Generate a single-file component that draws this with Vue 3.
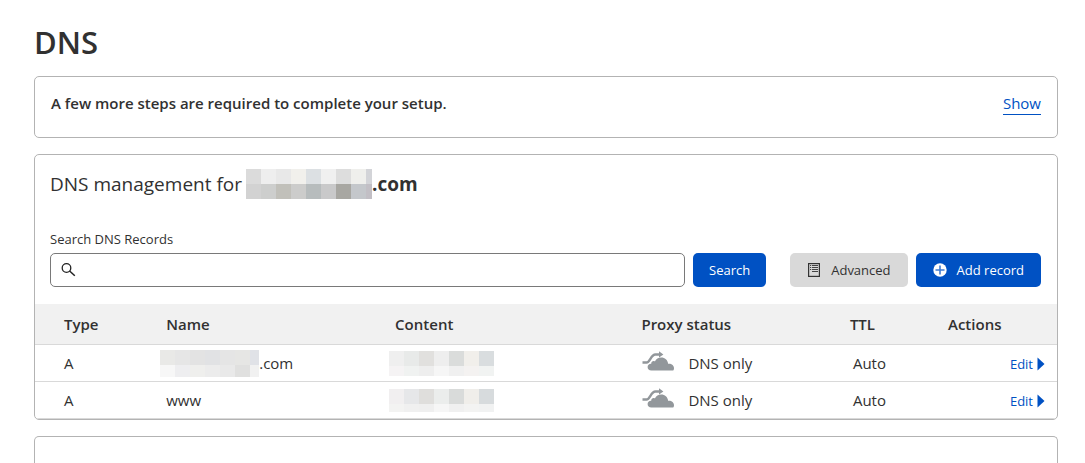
<script setup>
import { ref } from 'vue'

const query = ref('')

const domainMask = {
  width: 126,
  height: 30,
  rows: [
    ['#dbdbdb', '#eeeeee', '#e8e8e8', '#f1f0ec', '#dce0e3', '#f0f0f0', '#dddddd', '#efefec', '#d3d4d8'],
    ['#d2d2d2', '#cdcecd', '#c1c0ba', '#cccccb', '#b7bcbd', '#c9c9ca', '#a8a7a2', '#c4c7cb', '#c2bfc5'],
  ],
}

const records = [
  {
    type: 'A',
    name: '.com',
    nameMask: {
      width: 99,
      height: 27,
      rows: [
        ['#e9e9e7', '#e6e6e6', '#e3e3e3', '#e1e2e4', '#e5e5e5', '#e6e6e4', '#e0e2e7'],
        ['#f7f7f7', '#eeeef0', '#efefed', '#ececec', '#e9e9e9', '#e0e0df', '#f1f1f1'],
      ],
    },
    contentMask: {
      width: 105,
      height: 25,
      rows: [
        ['#efefef', '#e8eae9', '#e1e0de', '#eeeeee', '#dadcdb', '#f1efeb', '#d9dddf'],
        ['#f5f3f4', '#f0f2f1', '#eeeeee', '#f6f6f6', '#f0f0f0', '#f4f2f1', '#f1f3f2'],
      ],
    },
    ttl: 'Auto',
  },
  {
    type: 'A',
    name: 'www',
    nameMask: null,
    contentMask: {
      width: 105,
      height: 23,
      rows: [
        ['#f1eff0', '#e6e7e9', '#dfdedc', '#ebedec', '#d9dbda', '#f0eeea', '#d7dbdd'],
        ['#f3f3f2', '#f0f0f0', '#efefef', '#f6f6f6', '#f0f0f0', '#f3f3f2', '#f1f2f2'],
      ],
    },
    ttl: 'Auto',
  },
]
</script>

<template>
  <main class="page">
    <h1 class="title">DNS</h1>

    <section class="card notice">
      <strong class="notice-text">A few more steps are required to complete your setup.</strong>
      <a class="show" href="#">Show</a>
    </section>

    <section class="card">
      <h2 class="heading">
        <span>DNS management for</span>
        <svg class="mask" :width="domainMask.width" :height="domainMask.height" aria-hidden="true" shape-rendering="crispEdges">
          <template v-for="(row, y) in domainMask.rows" :key="y">
            <rect v-for="(fill, x) in row" :key="x" :x="x * 15" :y="y * 15" width="15" height="15" :fill="fill" />
          </template>
        </svg>
        <b>.com</b>
      </h2>

      <form class="toolbar" @submit.prevent>
        <div class="field">
          <label for="dns-search">Search DNS Records</label>
          <div class="search-row">
            <div class="input-wrap">
              <svg class="search-icon" width="16" height="16" viewBox="0 0 16 16" aria-hidden="true">
                <circle cx="5.5" cy="6" r="4.3" fill="none" stroke="#222" stroke-width="1.3" />
                <path d="M8.6 9L13.8 13.8" stroke="#222" stroke-width="1.5" />
              </svg>
              <input id="dns-search" v-model="query" type="text" />
            </div>
            <button class="btn primary search" type="submit">Search</button>
          </div>
        </div>
        <div class="actions">
          <button class="btn secondary" type="button">
            <svg width="14" height="14" viewBox="0 0 14 14" aria-hidden="true">
              <rect x="1.6" y="0.6" width="10.8" height="12.8" fill="none" stroke="#333" stroke-width="1.2" />
              <path d="M3 2.5h1.2M5 2.5h6M3 4.5h1.2M5 4.5h6M3 6.5h1.2M5 6.5h6M5 8.5h6" stroke="#333" stroke-width="0.9" />
            </svg>
            <span>Advanced</span>
          </button>
          <button class="btn primary" type="button">
            <svg width="14" height="14" viewBox="0 0 14 14" aria-hidden="true">
              <circle cx="7" cy="7" r="6.7" fill="#fff" />
              <path d="M7 2.5v9M2.5 7h9" stroke="#3f7bd3" stroke-width="1.6" />
            </svg>
            <span>Add record</span>
          </button>
        </div>
      </form>

      <table class="records">
        <colgroup>
          <col class="c-type" />
          <col class="c-name" />
          <col class="c-content" />
          <col class="c-proxy" />
          <col class="c-ttl" />
          <col class="c-actions" />
        </colgroup>
        <thead>
          <tr>
            <th scope="col">Type</th>
            <th scope="col">Name</th>
            <th scope="col">Content</th>
            <th scope="col">Proxy status</th>
            <th scope="col">TTL</th>
            <th scope="col">Actions</th>
          </tr>
        </thead>
        <tbody>
          <tr v-for="(record, i) in records" :key="i">
            <td>{{ record.type }}</td>
            <td>
              <div class="cell">
                <svg v-if="record.nameMask" class="mask inset" :width="record.nameMask.width" :height="record.nameMask.height" aria-hidden="true" shape-rendering="crispEdges">
                  <template v-for="(row, y) in record.nameMask.rows" :key="y">
                    <rect v-for="(fill, x) in row" :key="x" :x="x * 15" :y="y * 15" width="15" height="15" :fill="fill" />
                  </template>
                </svg>
                <span>{{ record.name }}</span>
              </div>
            </td>
            <td>
              <div class="cell">
                <svg class="mask inset" :width="record.contentMask.width" :height="record.contentMask.height" aria-hidden="true" shape-rendering="crispEdges">
                  <template v-for="(row, y) in record.contentMask.rows" :key="y">
                    <rect v-for="(fill, x) in row" :key="x" :x="x * 15" :y="y * 15" width="15" height="15" :fill="fill" />
                  </template>
                </svg>
              </div>
            </td>
            <td>
              <div class="cell proxy">
                <svg class="cloud" width="34" height="24" viewBox="0 0 34 24" aria-hidden="true">
                  <path d="M1.5 11.5H5.6C9.2 11.5 9.8 3.5 14.4 3.5H18.5" fill="none" stroke="#92979b" stroke-width="2.4" />
                  <path d="M18 0.3L22.4 3.4L18 6.5Z" fill="#92979b" />
                  <path d="M10.4 19.6C8 19.6 6.6 18 6.6 16C6.6 14 8.1 12.7 10.2 12.8C10.2 10.6 12.1 9.5 13.9 10.4C15.1 8 17.4 6.6 20.2 6.6C23.9 6.6 26.7 9.1 27.1 12.7C30.4 12.3 33 14.1 33 17.3C33 18.9 32.4 19.6 31.7 19.6Z" fill="#92979b" />
                </svg>
                <span>DNS only</span>
              </div>
            </td>
            <td class="ttl">{{ record.ttl }}</td>
            <td class="edit-cell">
              <a class="edit" href="#">
                <span>Edit</span>
                <svg width="8" height="14" viewBox="0 0 8 14" aria-hidden="true">
                  <path d="M0.5 0.5L7.5 7L0.5 13.5Z" fill="#0051c3" />
                </svg>
              </a>
            </td>
          </tr>
        </tbody>
      </table>
    </section>

    <section class="card next"></section>
  </main>
</template>

<style>
body {
  background: #fff;
}
</style>

<style scoped>
.page {
  box-sizing: border-box;
  padding: 20px 27px 0 34px;
  color: #313131;
  font-family: "Segoe UI", "Open Sans", "Noto Sans", sans-serif;
  font-size: 15px;
  line-height: 20px;
}
.title {
  margin: 0 0 12px;
  font-size: 31px;
  line-height: 44px;
  font-weight: 600;
}
.card {
  margin-bottom: 16px;
  border: 1px solid #b3b3b3;
  border-radius: 5px;
  overflow: hidden;
}
.notice {
  display: flex;
  justify-content: space-between;
  align-items: flex-start;
  padding: 16px 16px 22px;
}
.notice-text {
  line-height: 20px;
  font-weight: 600;
}
.show {
  color: #0051c3;
  line-height: 21px;
  text-decoration: none;
  border-bottom: 1px solid #0051c3;
}
.heading {
  display: flex;
  align-items: center;
  margin: 14px 16px 0 15px;
  font-size: 19px;
  line-height: 30px;
  font-weight: 400;
}
.heading b {
  font-weight: 700;
}
.heading .mask {
  margin-left: 4px;
}
.mask {
  display: block;
  flex: none;
}
.toolbar {
  display: flex;
  align-items: flex-end;
  gap: 24px;
  padding: 30px 16px 17px 15px;
}
.field {
  flex: 1;
}
.field label {
  display: block;
  margin-bottom: 4px;
  font-size: 13px;
  line-height: 20px;
}
.search-row {
  display: flex;
  align-items: center;
  gap: 8px;
}
.input-wrap {
  display: flex;
  flex: 1;
  align-items: center;
  gap: 8px;
  height: 32px;
  padding: 0 10px;
  border: 1px solid #797979;
  border-radius: 5px;
}
.input-wrap input {
  flex: 1;
  min-width: 0;
  padding: 0;
  border: 0;
  outline: 0;
  background: transparent;
  font: inherit;
}
.actions {
  display: flex;
  gap: 8px;
}
.btn {
  display: flex;
  align-items: center;
  justify-content: center;
  gap: 10px;
  height: 34px;
  padding: 0 17px;
  border: 0;
  border-radius: 5px;
  font-family: inherit;
  font-size: 13px;
  line-height: 20px;
  white-space: nowrap;
}
.search {
  padding: 0 16px;
}
.primary {
  background: #0051c3;
  color: #fff;
}
.secondary {
  background: #d9d9d9;
  color: #313131;
}
.records {
  width: 100%;
  border-collapse: collapse;
  table-layout: fixed;
}
.c-type {
  width: 10%;
}
.c-name {
  width: 22.4%;
}
.c-content {
  width: 24.1%;
}
.c-proxy {
  width: 20.4%;
}
.c-ttl {
  width: 9.6%;
}
.records th,
.records td {
  padding: 0 0 0 29px;
  border-bottom: 1px solid #d9d9d9;
  text-align: left;
  white-space: nowrap;
}
.records th {
  height: 40px;
  background: #f1f1f1;
  font-weight: 600;
}
.records td {
  height: 36px;
}
.cell {
  display: flex;
  align-items: center;
}
.inset {
  margin-left: -6px;
}
.proxy {
  gap: 13px;
}
.records .ttl {
  padding-left: 32px;
}
.records .edit-cell {
  padding-right: 12px;
  text-align: right;
}
.edit {
  display: inline-flex;
  align-items: center;
  gap: 4px;
  color: #0051c3;
  font-size: 13px;
  text-decoration: none;
}
.next {
  min-height: 26px;
  margin-bottom: 0;
  border-bottom: 0;
  border-radius: 5px 5px 0 0;
}
</style>
